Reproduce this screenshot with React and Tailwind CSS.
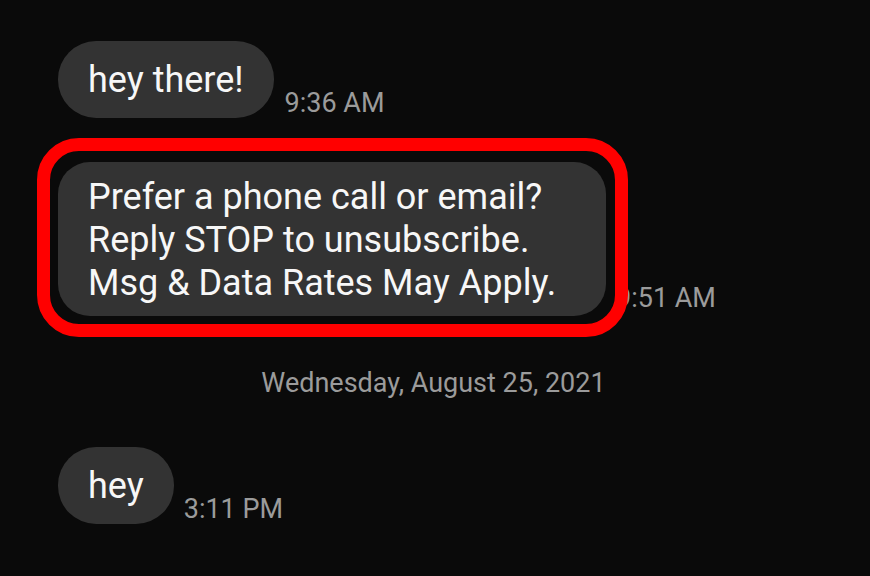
import React from 'react';

const Bubble = ({ children, className = '' }) => (
  <div className={`bg-[#333333] text-[#f7f7f7] text-[36px] px-[30px] ${className}`}>
    {children}
  </div>
);

const Time = ({ children, className = '' }) => (
  <span className={`text-[27px] text-[#9b9b9b] leading-[30px] ${className}`}>{children}</span>
);

export default function App() {
  return (
    <div
      className="w-[870px] h-[576px] bg-[#0a0a0a] overflow-hidden flex flex-col"
      style={{ fontFamily: 'Roboto, "Noto Sans", sans-serif' }}
    >
      <div className="flex items-end pl-[58px] mt-[41px]">
        <Bubble className="h-[77px] rounded-[38px] flex items-center">hey there!</Bubble>
        <Time className="ml-[11px]">9:36 AM</Time>
      </div>

      <div className="flex items-end pl-[58px] mt-[44px]">
        <div className="relative">
          <Bubble className="w-[548px] h-[154px] rounded-[32px] leading-[43px] pt-[14px]">
            Prefer a phone call or email?
            <br />
            Reply STOP to unsubscribe.
            <br />
            Msg &amp; Data Rates May Apply.
          </Bubble>
          <div className="absolute z-10 -left-[21px] -top-[24px] -right-[22px] -bottom-[21px] border-[13px] border-[#ff0000] rounded-[42px]" />
        </div>
        <Time className="ml-[10px] mb-[3px]">9:51 AM</Time>
      </div>

      <div className="flex justify-center mt-[52px]">
        <span className="text-[27px] text-[#9b9b9b] leading-[30px] ml-[-3px]">Wednesday, August 25, 2021</span>
      </div>

      <div className="flex items-end pl-[58px] mt-[49px]">
        <Bubble className="h-[77px] rounded-[38px] flex items-center">hey</Bubble>
        <Time className="ml-[10px]">3:11 PM</Time>
      </div>
    </div>
  );
}
